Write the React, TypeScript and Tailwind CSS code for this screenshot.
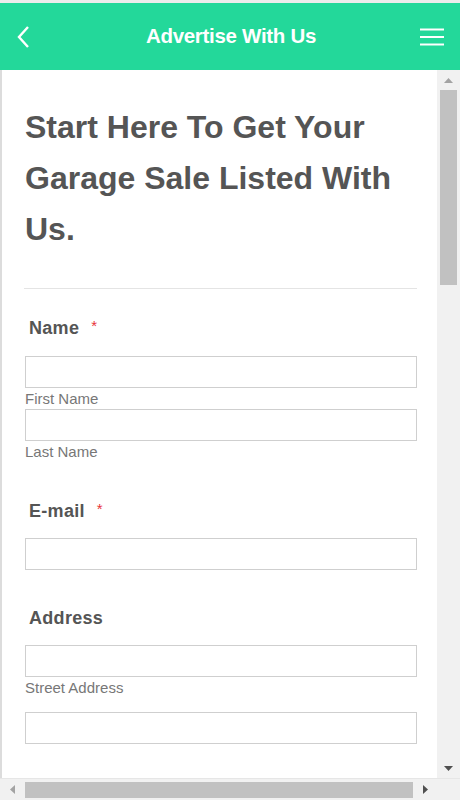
import React from "react";

const font = { fontFamily: '"Liberation Sans", Arial, sans-serif' };

const Field = ({ sub }: { sub?: string }) => (
  <div>
    <div className="h-[32px] w-[392px] border border-[#cfcfcf] bg-white" />
    {sub && <p className="text-[15px] leading-[21px] text-[#777]">{sub}</p>}
  </div>
);

const Label = ({ text, required }: { text: string; required?: boolean }) => (
  <div className="flex items-center pl-[4px] h-[24px]">
    <span className="text-[18px] font-bold text-[#555] tracking-[0.3px]">{text}</span>
    {required && <span className="ml-[12px] -mt-[4px] text-[15px] text-[#e8333a]">*</span>}
  </div>
);

export default function App() {
  return (
    <div className="w-[460px] h-[800px] flex flex-col overflow-hidden pt-[3px] bg-[#ececec]" style={font}>
      {/* header */}
      <div className="h-[67px] flex items-center justify-between bg-[#23d89a] pl-[2px]">
        <button className="w-[44px] h-full flex items-center justify-center">
          <svg width="16" height="24" viewBox="0 0 16 24">
            <polyline points="12,2 3,12 12,22" fill="none" stroke="white" strokeWidth="2.4" />
          </svg>
        </button>
        <h1 className="text-[20.5px] font-bold text-white tracking-[-0.3px] ml-[12px]">Advertise With Us</h1>
        <button className="w-[56px] h-full flex items-center justify-center">
          <svg width="24" height="18" viewBox="0 0 24 18">
            <line x1="0" y1="1.5" x2="24" y2="1.5" stroke="white" strokeWidth="2" />
            <line x1="0" y1="9" x2="24" y2="9" stroke="white" strokeWidth="2" />
            <line x1="0" y1="16.5" x2="24" y2="16.5" stroke="white" strokeWidth="2" />
          </svg>
        </button>
      </div>

      {/* body */}
      <div className="flex flex-1 min-h-0">
        <div className="flex-1 border-l-2 border-[#dcdcdc] bg-white pl-[23px] pt-[32px] overflow-hidden">
          <h2 className="text-[32px] leading-[51px] font-bold text-[#555] w-[400px]">
            Start Here To Get Your Garage Sale Listed With Us.
          </h2>
          <div className="mt-[33px] h-px w-[393px] -ml-[1px] bg-[#e4e4e4]" />

          <div className="mt-[27px]">
            <Label text="Name" required />
            <div className="mt-[16px]">
              <Field sub="First Name" />
              <Field sub="Last Name" />
            </div>
          </div>

          <div className="mt-[37px]">
            <Label text="E-mail" required />
            <div className="mt-[15px]">
              <Field />
            </div>
          </div>

          <div className="mt-[36px]">
            <Label text="Address" />
            <div className="mt-[15px] flex flex-col gap-[14px]">
              <Field sub="Street Address" />
              <Field />
            </div>
          </div>
        </div>

        {/* vertical scrollbar */}
        <div className="w-[23px] bg-[#f1f1f1] flex flex-col items-center">
          <div className="h-[20px] flex items-center justify-center">
            <svg width="9" height="5" viewBox="0 0 9 5"><polygon points="0,5 9,5 4.5,0" fill="#a3a3a3" /></svg>
          </div>
          <div className="w-[17px] h-[195px] bg-[#c1c1c1]" />
          <div className="flex-1" />
          <div className="h-[20px] flex items-center justify-center">
            <svg width="9" height="5" viewBox="0 0 9 5"><polygon points="0,0 9,0 4.5,5" fill="#505050" /></svg>
          </div>
        </div>
      </div>

      {/* horizontal scrollbar */}
      <div className="h-[22px] flex items-center bg-[#f1f1f1] border-t border-[#e6e6e6]">
        <div className="w-[25px] flex items-center justify-center">
          <svg width="5" height="9" viewBox="0 0 5 9"><polygon points="5,0 5,9 0,4.5" fill="#a3a3a3" /></svg>
        </div>
        <div className="w-[388px] h-[16px] bg-[#c1c1c1]" />
        <div className="w-[24px] flex items-center justify-center">
          <svg width="5" height="9" viewBox="0 0 5 9"><polygon points="0,0 0,9 5,4.5" fill="#505050" /></svg>
        </div>
        <div className="flex-1" />
      </div>
    </div>
  );
}
